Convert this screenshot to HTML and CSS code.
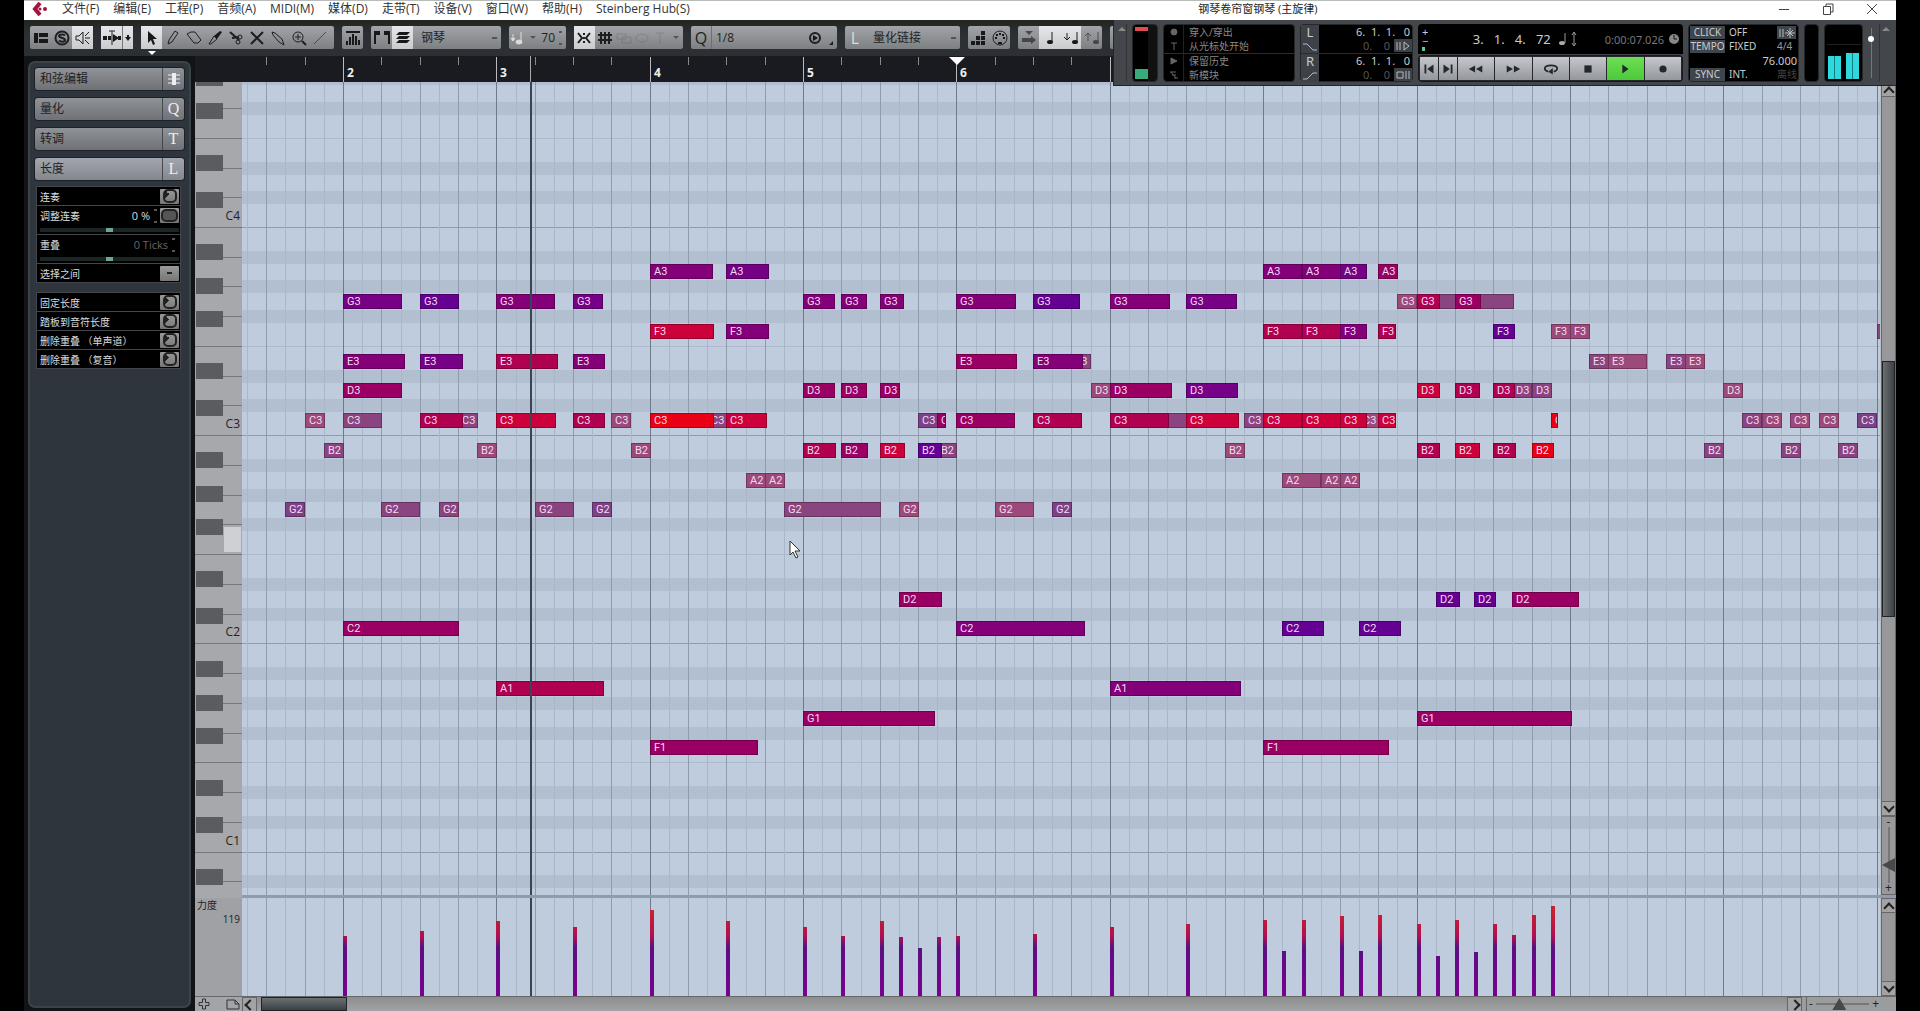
FILE: index.html
```html
<!DOCTYPE html>
<html lang="zh-CN">
<head>
  <meta charset="UTF-8">
  <title>钢琴卷帘窗</title>
  <meta name="viewport" content="width=device-width, initial-scale=1.0">
  <link rel="stylesheet" href="styles.css">
</head>
<body>

<div class="window">

  <header class="menubar">
    <svg class="logo" width="16" height="14" viewBox="0 0 16 14"><path d="M8 1 L3 7 L8 13" fill="none" stroke="#a3153f" stroke-width="4"/><circle cx="8" cy="7" r="1.500" fill="#a3153f"/><circle cx="13" cy="7" r="2" fill="#a3153f"/></svg>
    <nav>
      <a href="#">文件(F)</a>
      <a href="#">编辑(E)</a>
      <a href="#">工程(P)</a>
      <a href="#">音频(A)</a>
      <a href="#">MIDI(M)</a>
      <a href="#">媒体(D)</a>
      <a href="#">走带(T)</a>
      <a href="#">设备(V)</a>
      <a href="#">窗口(W)</a>
      <a href="#">帮助(H)</a>
      <a href="#">Steinberg Hub(S)</a>
    </nav>
    <h1>钢琴卷帘窗钢琴 (主旋律)</h1>
    <div class="win-buttons">
      <button aria-label="最小化"><svg width="12" height="12" viewBox="0 0 12 12"><path d="M1 6.5h10"/></svg></button>
      <button aria-label="还原"><svg width="12" height="12" viewBox="0 0 12 12"><path d="M1.500 3.500h7v8h-7zM4 3.500v-2.500h7v8h-2.500"/></svg></button>
      <button aria-label="关闭"><svg width="12" height="12" viewBox="0 0 12 12"><path d="M1 1l10 10M11 1l-10 10"/></svg></button>
    </div>
  </header>

  <div class="toolbar">
    <div class="group">
      <button aria-label="布局"><svg viewBox="0 0 16 16" class="fill"><path d="M1 3h4v10h-4zM6 3h9v4h-9zM6 9h9v4h-9z"/></svg></button>
      <button aria-label="独奏"><svg viewBox="0 0 16 16"><circle cx="8" cy="8" r="6.500" stroke-width="2"/><path stroke-width="2" d="M11 5.500c-1-1.500-6-1.500-6 .5s6 1.500 6 4-5 2-6 .5"/></svg></button>
      <button class="on" aria-label="声音反馈"><svg viewBox="0 0 16 16"><path d="M1 6h3l4-4v12l-4-4h-3zM10 6l4-4M10 8h5M10 10l4 4"/></svg></button>
    </div>
    <div class="group">
      <button class="on" aria-label="自动滚动"><svg viewBox="0 0 18 16" class="wide"><path class="f" d="M0 6h4v4h-4zM5 6h3v4h-3zM10 4l6 4-6 4zM15 6h3v4h-3z"/><path d="M9 1v14M6 1h6"/></svg></button>
      <button class="on narrow" aria-label="滚动设置"><svg viewBox="0 0 8 16" class="slim"><path class="f" d="M1 7h6l-3 4zM3 5h2v3h-2z"/></svg></button>
    </div>
    <div class="group tools">
      <button class="on tool-active" aria-label="选择"><svg viewBox="0 0 16 16" class="fill"><path d="M4 1l9 8h-4l2 5-2 1-2-5-3 3z"/></svg></button>
      <button aria-label="绘制"><svg viewBox="0 0 16 16"><path d="M3 14l1-4 6-9 3 2-6 9z"/></svg></button>
      <button aria-label="擦除"><svg viewBox="0 0 16 16"><path d="M1 4l4-2h4l6 8-3 3h-4z"/></svg></button>
      <button aria-label="修整"><svg viewBox="0 0 16 16"><path class="f" d="M7 6l6-5 2 1-5 7z"/><path d="M7 6l3 3-6 5-2 0z"/></svg></button>
      <button aria-label="分割"><svg viewBox="0 0 16 16"><path stroke-width="2" d="M2 2l9 8M4 8l7-1"/><circle cx="12" cy="7" r="2"/><circle cx="10" cy="12" r="2"/></svg></button>
      <button aria-label="静音"><svg viewBox="0 0 16 16"><path stroke-width="2" d="M2 2l12 12M14 2l-12 12"/></svg></button>
      <button aria-label="粘合"><svg viewBox="0 0 16 16"><path d="M2 2l3 1 7 6 2 6-5-3-6-7z"/></svg></button>
      <button aria-label="缩放"><svg viewBox="0 0 16 16"><circle cx="7" cy="7" r="5"/><path d="M4 7h6M7 4v6"/><path d="M11 11l4 4" stroke-width="2"/></svg></button>
      <button class="dim" aria-label="直线"><svg viewBox="0 0 16 16"><path d="M2 14l12-12"/></svg></button>
    </div>
    <div class="group">
      <button aria-label="自动选择控制器"><svg viewBox="0 0 16 16" class="fill"><path d="M1 1h14v2h-14zM7 4h2v11h-2zM4 7h2v8h-2zM10 6h2v9h-2zM1 11h2v4h-2zM13 10h2v5h-2z"/></svg></button>
    </div>
    <div class="group part">
      <button aria-label="显示范围"><svg viewBox="0 0 18 16" class="wide"><path class="f" d="M1 1h6v4h-4v9h-2zM11 1h6v13h-2v-9h-4z"/></svg></button>
      <button class="on" aria-label="编辑激活部分"><svg viewBox="0 0 16 16" class="fill"><path d="M4 2h11l-3 3h-11zM4 6h11l-3 3h-11zM4 10h11l-3 3h-11z"/></svg></button>
      <select aria-label="部分"><option>钢琴</option></select>
    </div>
    <div class="group vel">
      <svg viewBox="0 0 16 16" class="light"><path d="M11 2v10M3 4v6M1 8l2 3 2-3"/><ellipse cx="9" cy="12" rx="3" ry="2"/></svg>
      <i class="caret"></i>
      <input type="text" value="70" aria-label="插入力度">
      <i class="spin"></i>
    </div>
    <div class="group snap">
      <button class="on" aria-label="对齐"><svg viewBox="0 0 16 16"><path stroke-width="2" d="M2 3l4 5-4 5M14 3l-4 5 4 5M8 3v2M8 7v2M8 11v2"/></svg></button>
      <button aria-label="网格"><svg viewBox="0 0 16 16"><path stroke-width="2" d="M4 2v12M8 2v12M12 2v12M1 5h14M1 10h14"/></svg></button>
      <button class="off" aria-label="吸附"><svg viewBox="0 0 16 16"><path d="M1 4h9v5h-9zM6 7h9v6h-9z"/></svg></button>
      <button class="off" aria-label="循环"><svg viewBox="0 0 16 16"><ellipse cx="8" cy="8" rx="6" ry="4"/></svg></button>
      <button class="off" aria-label="光标"><svg viewBox="0 0 16 16"><path d="M8 3v11M4 3h8"/></svg></button>
      <i class="caret"></i>
    </div>
    <div class="group quant">
      <b>Q</b>
      <select aria-label="量化预设" class="plain"><option>1/8</option></select>
      <button aria-label="应用量化"><svg viewBox="0 0 16 16"><circle cx="8" cy="8" r="5" stroke-width="2"/><path class="f" d="M6 5l5 3-5 3z"/></svg></button>
      <i class="corner"></i>
    </div>
    <div class="group link">
      <b>L</b>
      <select aria-label="长度量化"><option>量化链接</option></select>
    </div>
    <div class="group">
      <button aria-label="步进输入"><svg viewBox="0 0 16 16" class="fill"><path d="M0 11h4v4h-4zM5 11h4v4h-4zM10 11h4v4h-4zM5 6h4v4h-4zM10 6h4v4h-4zM10 1h4v4h-4z"/></svg></button>
      <button aria-label="MIDI 输入"><svg viewBox="0 0 16 16"><circle cx="8" cy="8" r="7"/><path class="f" d="M3 7h2v2h-2zM11 7h2v2h-2zM7 3h2v2h-2zM4 4h2v2h-2zM10 4h2v2h-2zM6 12h4v2h-4z"/></svg></button>
    </div>
    <div class="group">
      <button class="dim" aria-label="移动插入模式"><svg viewBox="0 0 16 16" class="fill"><path d="M4 1h8l-4 4zM1 8h9v-2l5 4-5 4v-2h-9z"/></svg></button>
      <button class="on" aria-label="录制音高"><svg viewBox="0 0 16 16"><path d="M10 2v10"/><ellipse class="f" cx="8" cy="12" rx="3" ry="2"/></svg></button>
      <button class="on" aria-label="录制起音"><svg viewBox="0 0 16 16"><path d="M14 2v10M4 3v7M1 7l3 3 3-3"/><ellipse class="f" cx="12" cy="12" rx="3" ry="2"/></svg></button>
      <button class="dim" aria-label="录制释音"><svg viewBox="0 0 16 16"><path d="M14 2v10M4 3v8M1 6l3-3 3 3"/><ellipse class="f" cx="12" cy="12" rx="3" ry="2"/></svg></button>
    </div>
    <div class="group more"></div>
  </div>

  <div class="work">

    <aside class="inspector">
      <div class="inspector-box">
        <button class="tab"><span>和弦编辑</span><i><svg width="12" height="14" viewBox="0 0 12 14"><path d="M0 3h12M0 7h12M0 11h12" stroke="#eee"/><path d="M4 1h4v12h-4z" fill="#eee"/></svg></i></button>
        <button class="tab"><span>量化</span><i>Q</i></button>
        <button class="tab"><span>转调</span><i>T</i></button>
        <button class="tab open"><span>长度</span><i>L</i></button>

        <div class="rows">
          <div class="row"><span>连奏</span><button class="go" aria-label="连奏"></button></div>
          <div class="row slide">
            <label for="legato">调整连奏</label><output>0 %</output><i class="spin"></i><button class="go eye" aria-label="显示"></button>
            <input type="range" id="legato">
          </div>
          <div class="row slide gray">
            <label for="overlap">重叠</label><output>0 Ticks</output><i class="spin"></i>
            <input type="range" id="overlap">
          </div>
          <div class="row"><span>选择之间</span><button class="go minus" aria-label="选择之间"></button></div>
        </div>

        <div class="rows">
          <div class="row"><span>固定长度</span><button class="go" aria-label="固定长度"></button></div>
          <div class="row"><span>踏板到音符长度</span><button class="go" aria-label="踏板到音符长度"></button></div>
          <div class="row"><span>删除重叠 （单声道）</span><button class="go" aria-label="删除重叠单声道"></button></div>
          <div class="row"><span>删除重叠 （复音）</span><button class="go" aria-label="删除重叠复音"></button></div>
        </div>
      </div>
    </aside>

    <main class="editor">
      <div class="ruler" id="ruler"></div>
      <div class="keys" id="keys"></div>
      <div class="roll" id="roll"></div>
      <div class="vscroll">
        <button class="arrow up" aria-label="向上"></button>
        <div class="track"><div class="thumb"></div></div>
        <button class="arrow down" aria-label="向下"></button>
        <div class="vzoom"><span>-</span><input type="range" value="74" aria-label="垂直缩放"><span>+</span></div>
      </div>
      <div class="divider"></div>
      <div class="lane-head"><span>力度</span><output>119</output></div>
      <div class="lane" id="lane"></div>
      <div class="vscroll">
        <button class="arrow up" aria-label="向上"></button>
        <div class="track"></div>
        <button class="arrow down" aria-label="向下"></button>
      </div>
      <footer class="bottom">
        <div class="lane-tools">
          <button aria-label="添加控制器"><svg width="12" height="12" viewBox="0 0 12 12"><path d="M4.500 1h3v3.500h3.500v3h-3.500v3.500h-3v-3.500h-3.500v-3h3.500z"/></svg></button>
          <button aria-label="控制器预设"><svg width="14" height="12" viewBox="0 0 14 12"><path d="M1 2h8l4 4v5h-12zM9 2v4h4"/></svg></button>
        </div>
        <button class="arrow left" aria-label="向左"></button>
        <div class="htrack"><div class="hthumb"></div></div>
        <button class="arrow right" aria-label="向右"></button>
        <div class="hzoom"><span>-</span><input type="range" value="42" aria-label="水平缩放"><span>+</span></div>
      </footer>
    </main>

  </div>

  <section class="transport">
    <div class="grip"></div>
    <div class="box level"><i></i><b></b></div>
    <div class="box modes">
      <p><i><svg width="8" height="8" viewBox="0 0 8 8"><circle cx="4" cy="4" r="3" fill="#666"/></svg></i><span>穿入/穿出</span></p>
      <p><i><svg width="8" height="8" viewBox="0 0 8 8"><path d="M1 1h6M4 1v7"/></svg></i><span>从光标处开始</span></p>
      <hr>
      <p><i><svg width="8" height="8" viewBox="0 0 8 8"><path d="M1 1v6l6-3z" fill="#666"/></svg></i><span>保留历史</span></p>
      <p><i><svg width="8" height="8" viewBox="0 0 8 8"><path d="M0 1h6M2 4h4M4 7h4M1 1l5 6"/></svg></i><span>新模块</span></p>
    </div>
    <div class="box locators">
      <div><b>L</b><span>6. &nbsp;1. &nbsp;1. &nbsp; 0</span></div>
      <div class="low"><b><svg width="14" height="8" viewBox="0 0 14 8"><path d="M0 1h4l6 6h4"/></svg></b><span>0. &nbsp; &nbsp;0</span><button aria-label="穿入"><svg width="14" height="10" viewBox="0 0 14 10"><path d="M1 1v8M4 1v8M8 1v8l5-4z"/></svg></button></div>
      <hr>
      <div><b>R</b><span>6. &nbsp;1. &nbsp;1. &nbsp; 0</span></div>
      <div class="low"><b><svg width="14" height="8" viewBox="0 0 14 8"><path d="M0 7h4l6-6h4"/></svg></b><span>0. &nbsp; &nbsp;0</span><button aria-label="穿出"><svg width="14" height="10" viewBox="0 0 14 10"><path d="M1 2h6v6h-6zM10 1v8M13 1v8"/></svg></button></div>
    </div>
    <div class="center">
      <div class="display">
        <div class="nudge"><span>+</span><span>−</span><i></i></div>
        <output class="pos">3. &nbsp; 1. &nbsp; 4. &nbsp; 72</output>
        <svg class="unit" width="20" height="18" viewBox="0 0 20 18"><path d="M8 3v10M17 3v12M15 5l2-3 2 3M15 13l2 3 2-3" stroke="#999" fill="none"/><ellipse cx="5" cy="13" rx="3" ry="2" fill="#aaa"/></svg>
        <output class="time">0:00:07.026</output>
        <svg width="10" height="10" viewBox="0 0 10 10"><circle cx="5" cy="5" r="5" fill="#888"/><path d="M5 1v4h3" stroke="#111" fill="none"/></svg>
      </div>
      <div class="buttons">
        <button class="small" aria-label="上一标记"><svg viewBox="0 0 20 12"><path d="M5 1h2v10h-2zM15 1v10l-7-5z"/></svg></button>
        <button class="small" aria-label="下一标记"><svg viewBox="0 0 20 12"><path d="M13 1h2v10h-2zM5 1v10l7-5z"/></svg></button>
        <button aria-label="后退"><svg viewBox="0 0 20 12"><path d="M9 2v8l-7-4zM17 2v8l-7-4z"/></svg></button>
        <button aria-label="前进"><svg viewBox="0 0 20 12"><path d="M3 2v8l7-4zM11 2v8l7-4z"/></svg></button>
        <button aria-label="循环"><svg viewBox="0 0 20 12"><path d="M7 9c-6-2-5-7 3-7s9 5 3 7" fill="none" stroke="#23282c" stroke-width="2"/><path d="M12 5v7l-5-3z"/></svg></button>
        <button aria-label="停止"><svg viewBox="0 0 20 12"><path d="M6 2h8v8h-8z"/></svg></button>
        <button class="play" aria-label="播放"><svg viewBox="0 0 20 12"><path d="M7 1v10l7-5z"/></svg></button>
        <button aria-label="录音"><svg viewBox="0 0 20 12"><circle cx="10" cy="6" r="4"/></svg></button>
      </div>
    </div>
    <div class="box tempo">
      <button>CLICK</button><span>OFF</span><button class="count" aria-label="预备拍"><svg width="16" height="10" viewBox="0 0 16 10"><path d="M1 1v8M4 1v8M11 0v10M6 5h10M8 2l6 6M14 2l-6 6"/></svg></button>
      <button>TEMPO</button><span>FIXED</span><span class="sig">4/4</span>
      <output>76.000</output>
      <button>SYNC</button><span>INT.</span><span class="faint">离线</span>
    </div>
    <div class="box midi"></div>
    <div class="box meter"><i class="ch1"></i><i class="ch2"></i></div>
    <div class="fader"><i></i></div>
    <div class="grip end"></div>
  </section>

</div>

<script src="script.js"></script>
</body>
</html>
```
FILE: styles.css
```css
* {
  box-sizing: border-box;
}

body {
  margin: 0;
  padding: 0 24px;
  background: #000;
  font-family: "Open Sans", "Noto Sans CJK SC", sans-serif;
  font-size: 12px;
  color: #222;
}

button, input, select {
  font: inherit;
  color: inherit;
  border: 0;
  margin: 0;
  padding: 0;
  background: none;
}

.window {
  position: relative;
  display: flex;
  flex-direction: column;
  height: 100vh;
  background: #1b1d22;
  overflow: hidden;
}

/* menu */
.menubar {
  display: flex;
  align-items: center;
  height: 20px;
  padding: 0 18px 4px 8px;
  background: #fff;
  border-top: 1px solid #b9bdb9;
  flex: none;
}

.menubar nav {
  display: flex;
  gap: 14px;
  margin-left: 14px;
}

.menubar a {
  color: #333;
  text-decoration: none;
  line-height: 16px;
  white-space: nowrap;
}

.menubar h1 {
  flex: 1;
  margin: 0;
  padding-left: 48px;
  font-size: 11px;
  font-weight: normal;
  line-height: 16px;
  text-align: center;
}

.win-buttons {
  display: flex;
  gap: 32px;
}

.win-buttons button {
  display: flex;
}

.win-buttons svg {
  fill: none;
  stroke: #444;
}

/* toolbar */
.toolbar {
  display: flex;
  gap: 8px;
  height: 36px;
  padding: 6px;
  background: linear-gradient(#22261f, #2c2f34 40%);
  flex: none;
}

.group {
  display: flex;
  align-items: center;
  height: 23px;
  background: linear-gradient(#a2a4a6, #7d8083);
  border-radius: 2px;
}

.group button {
  position: relative;
  display: flex;
  align-items: center;
  justify-content: center;
  width: 21px;
  height: 23px;
}

.group .on {
  background: linear-gradient(#e6e7e8, #c9cbcd);
}

.group .narrow {
  width: 11px;
  border-left: 1px solid #777;
}

.group svg {
  width: 16px;
  height: 16px;
  fill: none;
  stroke: #1c1e20;
}

.group svg.wide {
  width: 18px;
}

.group svg.slim {
  width: 8px;
}

.group svg.fill, .group .f {
  fill: #16181a;
  stroke: none;
}

.group .dim {
  opacity: 0.6;
}

.group .off {
  opacity: 0.15;
  width: 18px;
}

.group select {
  appearance: none;
  flex: 1;
  height: 23px;
  padding: 0 8px;
  font-size: 12px;
  background: linear-gradient(#555, #555) no-repeat right 4px center / 5px 2px;
}

.group select.plain {
  background: none;
  border-left: 1px solid #6d7073;
  padding: 0 4px;
}

.group b {
  width: 20px;
  text-align: center;
  font-size: 16px;
  font-weight: normal;
}

.group .light {
  fill: #dcdcdc;
  stroke: #dcdcdc;
}

.tools {
  padding-right: 4px;
}

.more {
  width: 20px;
}

.tool-active::after {
  content: "";
  position: absolute;
  top: 25px;
  left: 7px;
  border: 4px solid transparent;
  border-top-color: #fff;
}

.part {
  width: 130px;
}

.vel {
  width: 57px;
  padding: 0 3px 0 1px;
}

.vel input {
  flex: 1;
  min-width: 0;
  text-align: right;
}

.snap {
  width: 109px;
}

.quant {
  width: 146px;
}

.link {
  width: 115px;
}

.link b {
  color: #dcdcdc;
}

.caret {
  width: 6px;
  height: 0;
  border: 3px solid transparent;
  border-top-color: #555;
  border-bottom: 0;
  margin: 0 4px;
}

.corner {
  align-self: flex-end;
  margin: 4px;
  border: 2px solid #1c1e20;
  border-top-color: transparent;
  border-left-color: transparent;
}

.spin {
  width: 5px;
  height: 14px;
  margin-left: 3px;
  background:
    linear-gradient(#555, #555) top / 3px 2px no-repeat,
    linear-gradient(#555, #555) bottom / 3px 2px no-repeat;
}

/* inspector */
.work {
  display: flex;
  flex: 1;
  min-height: 0;
}

.inspector {
  width: 171px;
  padding: 5px 4px 3px;
  background: #111317;
  flex: none;
}

.inspector-box {
  height: 100%;
  padding: 5px;
  border: 2px solid #3a4448;
  border-radius: 7px;
  background: #2f353d;
}

.tab {
  display: flex;
  width: 149px;
  height: 22px;
  margin-bottom: 8px;
  border-radius: 3px;
  background: linear-gradient(#8f9297, #6e7176);
  box-shadow: 0 0 0 1px #1d2024;
  line-height: 22px;
  text-align: left;
}

.tab.open {
  background: linear-gradient(#a3a6ae, #84878d);
  margin-bottom: 6px;
}

.tab span {
  flex: 1;
  padding-left: 5px;
}

.tab i {
  display: flex;
  align-items: center;
  justify-content: center;
  width: 22px;
  height: 22px;
  border-left: 1px solid #44474c;
  color: #eee;
  font: 16px "Liberation Serif", serif;
}

.rows {
  margin: 0 3px 9px 1px;
  padding: 1px;
  background: #43454a;
}

.row {
  display: flex;
  align-items: center;
  height: 18px;
  padding: 0 1px 0 3px;
  background: #000;
  color: #ddd;
  font-size: 10px;
}

.row + .row {
  margin-top: 1px;
}

.row span, .row label {
  flex: 1;
}

.row.slide {
  flex-wrap: wrap;
  height: 28px;
}

.row.slide .go {
  margin-left: 2px;
}

.slide output {
  font-size: 11px;
}

.slide input {
  appearance: none;
  width: 140px;
  height: 4px;
  background: #1a2526;
}

.slide input::-webkit-slider-thumb {
  appearance: none;
  width: 7px;
  height: 4px;
  background: #6fa595;
}

.slide.gray output {
  color: #666;
}

.slide.gray .spin {
  margin-right: 3px;
}

.go {
  display: flex;
  align-items: center;
  justify-content: center;
  width: 19px;
  height: 15px;
  background: linear-gradient(#999, #777);
  border-radius: 1px;
}

.go::before {
  content: "";
  width: 10px;
  height: 10px;
  border: 2px solid #222;
  border-radius: 5px;
  background: conic-gradient(from 225deg at 4px 3px, #222 90deg, transparent 0);
}

.go.eye::before {
  width: 13px;
  height: 9px;
  background: #555;
}

.go.minus::before {
  width: 5px;
  height: 2px;
  border: 0;
  border-radius: 0;
  background: #222;
}

/* editor */
.editor {
  display: grid;
  flex: 1;
  min-width: 0;
  grid-template-columns: 47px 1fr 16px;
  grid-template-rows: 26px 1fr 3px 98px 15px;
  background: #9a9a9c;
}

.ruler {
  position: relative;
  grid-column: 1 / 4;
  background: #191b21;
  overflow: hidden;
}

.ruler i {
  position: absolute;
  top: 1px;
  width: 1px;
  height: 8px;
  background: #888;
}

.ruler .bar {
  height: 25px;
  background: #bbb;
}

.ruler b {
  position: absolute;
  bottom: 1px;
  margin-left: 4px;
  font-size: 12px;
  line-height: 16px;
  color: #eee;
}

.ruler .marker {
  position: absolute;
  top: 1px;
  margin-left: -7px;
  border: 8px solid transparent;
  border-top-color: #fff;
  border-bottom: 0;
}

.keys {
  position: relative;
  background: #a7a8ab;
  overflow: hidden;
}

.keys i {
  position: absolute;
  right: 0;
  width: 20px;
  height: 1px;
  background: #76777a;
}

.keys .whole {
  width: 47px;
}

.keys .black {
  position: absolute;
  left: 1px;
  width: 27px;
  height: 16px;
  background: #5b5c60;
}

.keys span {
  position: absolute;
  right: 2px;
  line-height: 16px;
  font-size: 12px;
}

.keys .pressed {
  position: absolute;
  right: 1px;
  width: 17px;
  height: 25px;
  background: #cfd0d3;
}

.roll, .lane {
  position: relative;
  overflow: hidden;
  background: #bfccdd;
}

.stripe {
  position: absolute;
  width: 100%;
  height: 13px;
  background: #b2bfd0;
}

.octave, .half-octave {
  position: absolute;
  width: 100%;
  height: 1px;
  background: #8f9cac;
}

.half-octave {
  background: #aebacb;
}

.line {
  position: absolute;
  top: 0;
  bottom: 0;
  width: 1px;
  background: #aab7c8;
}

.line.beat {
  background: #8f9cad;
}

.line.bar {
  background: #6f7b8b;
}

.playhead {
  position: absolute;
  top: 0;
  bottom: 0;
  width: 2px;
  background: #3c4452;
}

.ruler .playhead {
  background: #aaa;
  width: 1px;
}

.note {
  position: absolute;
  height: 15px;
  padding-left: 3px;
  border: 1px solid #0004;
  color: #f0dcee;
  font: 11px/13px "Roboto", sans-serif;
  overflow: hidden;
  white-space: nowrap;
}

.n0 { background: #640092; }
.n1 { background: #760086; }
.n2 { background: #840078; }
.n3 { background: #9a0064; }
.n4 { background: #b00050; }
.n5 { background: #cc003a; }
.n6 { background: #ea0014; }
.m0 { background: #7c4187; }
.m1 { background: #8a4580; }
.m2 { background: #9c4a7c; }

.pointer {
  position: absolute;
  width: 12px;
  height: 19px;
}

.velocity {
  position: absolute;
  bottom: 0;
  width: 4px;
  background: linear-gradient(to top, #7a0090, #5a1080 48px, #b01050 60px, #c82030 84px);
}

.divider {
  grid-column: 1 / 4;
  background: linear-gradient(90deg, #a7a8ab 47px, #8f9cab 47px);
}

.lane-head {
  display: flex;
  flex-direction: column;
  padding: 0 2px;
  background: #a0a1a4;
  font-size: 10px;
  line-height: 14px;
}

.lane-head output {
  text-align: right;
}

.vscroll {
  display: flex;
  flex-direction: column;
  border-left: 1px solid #b8c0c8;
  background: #98989a;
}

.arrow {
  display: flex;
  align-items: center;
  justify-content: center;
  width: 15px;
  height: 15px;
  border: 1px solid #666;
  background: #a3a3a3;
  flex: none;
}

.arrow::before {
  content: "";
  width: 6px;
  height: 6px;
  border: solid #222;
  border-width: 2px 2px 0 0;
}

.up::before {
  transform: translateY(2px) rotate(-45deg);
}

.down::before {
  transform: translateY(-2px) rotate(135deg);
}

.left::before {
  transform: rotate(-135deg);
}

.right::before {
  transform: rotate(45deg);
}

.track {
  flex: 1;
  display: flex;
  flex-direction: column;
  border: solid #666;
  border-width: 0 1px;
}

/* share of the keyboard above the visible part */
.track::before {
  content: "";
  flex: 265;
}

.track::after {
  content: "";
  flex: 185;
}

.thumb {
  flex: 256;
  background: linear-gradient(90deg, #6a6f72, #3b4044);
  border: 1px solid #222;
}

.vzoom {
  display: flex;
  flex-direction: column;
  align-items: center;
  height: 79px;
  border: 1px solid #666;
  line-height: 10px;
}

.vzoom input {
  appearance: none;
  writing-mode: vertical-lr;
  width: 13px;
  height: 56px;
  background: linear-gradient(#777, #777) center / 2px 100% no-repeat;
}

.vzoom input::-webkit-slider-thumb {
  appearance: none;
  width: 13px;
  height: 14px;
  background: #45494c;
  clip-path: polygon(0 50%, 100% 0, 100% 100%);
}

.bottom {
  display: flex;
  grid-column: 1 / 4;
  background: #9b9c9e;
  border-top: 1px solid #66686b;
}

.lane-tools {
  display: flex;
  align-items: center;
  justify-content: space-between;
  width: 47px;
  padding: 0 2px 0 3px;
  background: #a3a4a7;
}

.lane-tools svg {
  display: block;
  fill: none;
  stroke: #333;
}

.htrack {
  display: flex;
  flex: 1;
  padding-left: 4px;
  background: linear-gradient(#8d8d8f, #a2a2a4);
}

.hthumb {
  width: 86px;
  background: linear-gradient(#6a6f72, #3b4044);
  border: 1px solid #222;
}

.hzoom {
  display: flex;
  align-items: center;
  width: 75px;
  margin: 0 15px 0 4px;
  padding: 0 2px;
  border-left: 1px solid #666;
  line-height: 10px;
}

.hzoom input {
  appearance: none;
  flex: 1;
  min-width: 0;
  height: 14px;
  margin: 0 3px;
  background: linear-gradient(#777, #777) center / 100% 2px no-repeat;
}

.hzoom input::-webkit-slider-thumb {
  appearance: none;
  width: 14px;
  height: 12px;
  background: #45494c;
  clip-path: polygon(50% 0, 100% 100%, 0 100%);
}

/* transport panel floats over the toolbar and ruler */
.transport {
  position: absolute;
  top: 20px;
  right: 0;
  display: flex;
  gap: 5px;
  height: 66px;
  padding: 4px 2px 3px;
  background: #43464a;
  border: solid #22252a;
  border-width: 0 0 1px 1px;
  color: #ccc;
  font: 11px "Noto Sans", "Noto Sans CJK SC", sans-serif;
}

.box {
  background: #000;
  border-radius: 4px;
  border: 1px solid #25282b;
}

.transport hr {
  margin: 0;
  border: 0;
  border-top: 1px solid #2c2c2c;
}

.grip {
  width: 11px;
  border-right: 1px solid #333;
}

.grip::before {
  content: "";
  display: block;
  margin: 3px 0 0 2px;
  width: 0;
  border: 4px solid transparent;
  border-top: 0;
  border-bottom-color: #888;
}

.grip.end {
  width: 15px;
  border-right: 0;
  border-left: 1px solid #333;
}

.level {
  display: flex;
  flex-direction: column;
  justify-content: space-between;
  width: 26px;
  padding: 2px;
  background: linear-gradient(90deg, #000 15px, #111 15px);
}

.level i {
  width: 13px;
  height: 4px;
  background: #e04a50;
}

.level b {
  width: 13px;
  height: 10px;
  background: #38ab7c;
}

.modes {
  width: 132px;
  font-size: 10px;
  color: #888;
}

.modes p {
  display: flex;
  margin: 0;
  height: 14px;
  line-height: 14px;
}

.modes i {
  display: flex;
  align-items: center;
  justify-content: center;
  width: 20px;
  margin-right: 5px;
  border-right: 1px solid #222;
}

.modes svg {
  fill: none;
  stroke: #666;
}

.locators {
  width: 113px;
}

.locators div {
  display: flex;
  height: 14px;
  line-height: 14px;
}

.locators b {
  width: 18px;
  text-align: center;
  background: #3d4248;
  font-size: 13px;
  font-weight: normal;
}

.locators svg {
  fill: none;
  stroke: #bbb;
}

.locators span {
  flex: 1;
  padding-right: 2px;
  text-align: right;
}

.locators .low span {
  color: #555;
  padding-right: 4px;
}

.locators button {
  display: flex;
  align-items: center;
  justify-content: center;
  width: 18px;
  height: 13px;
  background: #3d4248;
}

.center {
  display: flex;
  flex-direction: column;
  width: 265px;
}

.display {
  display: flex;
  align-items: center;
  height: 30px;
  padding: 0 4px;
  background: #000;
  border-radius: 4px 4px 0 0;
}

.nudge {
  display: flex;
  flex-direction: column;
  width: 10px;
  line-height: 9px;
}

.nudge i {
  width: 3px;
  height: 4px;
  margin-top: 2px;
  background: #5fc79c;
}

.pos {
  flex: 1;
  text-align: right;
  font-size: 13px;
}

.unit {
  margin-left: 6px;
}

.time {
  padding: 0 5px 0 28px;
  color: #777;
}

.buttons {
  display: flex;
  flex: 1;
  gap: 1px;
  margin-top: 1px;
  padding: 1px;
  border: 1px solid #17191b;
  border-radius: 4px;
  background: #25282b;
}

.buttons button {
  flex: 1;
  display: flex;
  align-items: center;
  justify-content: center;
  background: linear-gradient(#c5c7cc, #94979d);
}

.buttons .small {
  flex: none;
  width: 18px;
}

.buttons .play {
  background: linear-gradient(#6ede55, #4cc93b);
}

.buttons svg {
  width: 18px;
  height: 12px;
  fill: #23282c;
}

.tempo {
  display: grid;
  grid-template-columns: 35px 1fr auto;
  grid-template-rows: 14px 14px 14px 14px;
  column-gap: 4px;
  width: 111px;
  padding: 1px;
  font-size: 10px;
  line-height: 13px;
}

.tempo button {
  height: 13px;
  background: #3f454d;
  line-height: 13px;
}

.tempo .count {
  display: flex;
  align-items: center;
  justify-content: center;
  width: 19px;
}

.tempo svg {
  stroke: #bbb;
}

.tempo output {
  grid-column: 1 / 4;
  text-align: right;
  font-size: 11px;
}

.sig {
  color: #999;
}

.faint {
  color: #444;
}

.midi {
  width: 15px;
}

.meter {
  display: flex;
  align-items: flex-end;
  justify-content: space-between;
  width: 39px;
  padding: 2px 3px;
  background: linear-gradient(#222, #222) center 19px / 34px 1px no-repeat #000;
}

.meter i {
  width: 13px;
  background: linear-gradient(90deg, #2fd8dc 6px, #0f7f84 6px, #0f7f84 7px, #2fd8dc 7px);
}

.meter .ch1 {
  height: 23px;
}

.meter .ch2 {
  height: 26px;
}

.fader {
  width: 6px;
  margin: 4px 0;
  background: linear-gradient(#777, #777) center / 1px 100% no-repeat;
}

.fader i {
  display: block;
  width: 6px;
  height: 6px;
  margin-top: 8px;
  border-radius: 3px;
  background: #fff;
}
```
FILE: script.js
```js
// one step = an eighth note, step 0 = start of bar 2
const STEP = 19.17;
const ORIGIN = 101;
const KEYS_WIDTH = 47;
// one white key row
const ROW = 29.74;
const C4_LINE = 145;

const roll = document.getElementById('roll');
const lane = document.getElementById('lane');
const ruler = document.getElementById('ruler');
const keys = document.getElementById('keys');

const xOf = step => Math.round(ORIGIN + step * STEP);

// pitch: [step, length, colour]; muted parts first, they lie underneath
const notes = {
  A3: [[16, 3.25, 'n2'], [20, 2.2, 'n1'], [48, 2, 'n2'], [50, 2, 'n2'], [52, 1.35, 'n1'], [54, 1, 'n3']],
  G3: [[55, 1, 'm2'], [56, 5, 'm1'], [0, 3, 'n1'], [4, 2, 'n0'], [8, 3, 'n2'], [12, 1.5, 'n1'], [24, 1.6, 'n2'],
    [26, 1.3, 'n2'], [28, 1.2, 'n2'], [32, 3.1, 'n2'], [36, 2.4, 'n0'], [40, 3.1, 'n2'], [44, 2.6, 'n1'],
    [56, 1.15, 'n4'], [58, 1.3, 'n3']],
  F3: [[63, 1, 'm2'], [64, 1, 'm2'], [80, 1, 'm1'], [16, 3.3, 'n5'], [20, 2.2, 'n2'], [48, 2, 'n4'], [50, 2, 'n4'],
    [52, 1.35, 'n2'], [54, 0.9, 'n4'], [60, 1.1, 'n0']],
  E3: [[38, 1, 'm1'], [65, 1, 'm1'], [66, 2, 'm2'], [69, 1, 'm1'], [70, 1, 'm2'], [0, 3.2, 'n2'], [4, 2.2, 'n1'],
    [8, 3.2, 'n4'], [12, 1.6, 'n2'], [32, 3.15, 'n3'], [36, 2.55, 'n2']],
  D3: [[39, 1, 'm2'], [61, 1, 'm1'], [62, 1, 'm1'], [72, 1, 'm2'], [0, 3.05, 'n3'], [24, 1.6, 'n3'], [26, 1.3, 'n3'],
    [28, 1, 'n3'], [40, 3.2, 'n3'], [44, 2.65, 'n1'], [56, 1.15, 'n5'], [58, 1.25, 'n4'], [60, 1.1, 'n4']],
  C3: [[-2, 1, 'm2'], [0, 2, 'm1'], [6, 1, 'm1'], [14, 1, 'm2'], [19, 1, 'm1'], [30, 1, 'm0'], [42, 2, 'm1'],
    [47, 1, 'm1'], [53, 1, 'm2'], [73, 1, 'm1'], [74, 1, 'm2'], [75.5, 1, 'm2'], [77, 1, 'm2'], [79, 1, 'm0'],
    [4, 2.2, 'n4'], [8, 3.1, 'n5'], [12, 1.6, 'n4'], [16, 3.3, 'n6'], [20, 2.1, 'n5'], [31, 0.4, 'n3'],
    [32, 3.05, 'n3'], [36, 2.5, 'n4'], [40, 3, 'n4'], [44, 2.7, 'n5'], [48, 2, 'n5'], [50, 2, 'n5'],
    [52, 1.35, 'n5'], [54, 0.9, 'n5'], [63, 0.3, 'n6']],
  B2: [[-1, 1, 'm1'], [7, 1, 'm2'], [15, 1, 'm2'], [31, 1, 'm1'], [46, 1, 'm2'], [71, 1, 'm1'], [75, 1, 'm1'],
    [78, 1, 'm1'], [24, 1.65, 'n4'], [26, 1.35, 'n3'], [28, 1.25, 'n5'], [30, 1.2, 'n0'], [56, 1.15, 'n4'],
    [58, 1.25, 'n5'], [60, 1.15, 'n4'], [62, 1.1, 'n6']],
  A2: [[21, 1, 'm2'], [22, 1, 'm2'], [49, 2, 'm2'], [51, 1, 'm2'], [52, 1, 'm2']],
  G2: [[-3, 1, 'm0'], [2, 2, 'm1'], [5, 1, 'm1'], [10, 2, 'm1'], [13, 1, 'm0'], [23, 5, 'm1'], [29, 1, 'm2'],
    [34, 2, 'm2'], [37, 1, 'm0']],
  D2: [[29, 2.2, 'n3'], [57, 1.2, 'n0'], [59, 1.1, 'n0'], [61, 3.45, 'n3']],
  C2: [[0, 6, 'n3'], [32, 6.7, 'n2'], [49, 2.15, 'n0'], [53, 2.15, 'n0']],
  A1: [[8, 5.6, 'n4'], [40, 6.8, 'n2']],
  G1: [[24, 6.85, 'n3'], [56, 8.05, 'n3']],
  F1: [[16, 5.6, 'n3'], [48, 6.5, 'n3']]
};

// [step, height]
const velocities = [
  [0, 60], [4, 65], [8, 75], [12, 69], [16, 86], [20, 75], [24, 69], [26, 60], [28, 75], [29, 59],
  [30, 48], [31, 59], [32, 60], [36, 62], [40, 69], [44, 72], [48, 76], [49, 45], [50, 76], [52, 80],
  [53, 45], [54, 81], [56, 72], [57, 40], [58, 76], [59, 44], [60, 72], [61, 61], [62, 81], [63, 90]
];

function add(parent, tag, cls, style, text) {
  const el = document.createElement(tag);
  if (cls) el.className = cls;
  for (const k in style) el.style[k] = style[k] + 'px';
  if (text) el.textContent = text;
  parent.appendChild(el);
  return el;
}

// rows and keyboard
const blackTops = { 1: 35, 2: 72, 4: 124, 5: 157, 6: 191 };
for (let oct = 4; oct >= 0; oct--) {
  const base = C4_LINE + (4 - oct) * ROW * 7;
  add(roll, 'div', 'octave', { top: Math.round(base) });
  add(keys, 'i', 'whole', { top: Math.round(base) });
  if (oct > 0) add(keys, 'span', '', { top: Math.round(base) - 19 }, 'C' + oct);
  for (let k = 1; k < 7; k++) {
    const y = Math.round(base - k * ROW);
    if (k === 3) {
      add(roll, 'div', 'half-octave', { top: y });
      add(keys, 'i', 'whole', { top: y });
    } else {
      add(roll, 'div', 'stripe', { top: y - 6 });
      add(keys, 'i', '', { top: y });
      add(keys, 'div', 'black', { top: Math.round(base) - blackTops[k] });
    }
  }
}
add(keys, 'div', 'pressed', { top: 445 });

// time lines
for (let s = -5; xOf(s) < roll.clientWidth; s++) {
  const cls = s % 8 === 0 ? 'line bar' : s % 2 === 0 ? 'line beat' : 'line';
  add(roll, 'div', cls, { left: xOf(s) });
  add(lane, 'div', cls, { left: xOf(s) });
  // bars from 7 on are hidden behind the transport panel
  if (s > 40) continue;
  if (s % 2 === 0) add(ruler, 'i', s % 8 === 0 ? 'bar' : '', { left: xOf(s) + KEYS_WIDTH });
  if (s % 8 === 0 && s < 40) add(ruler, 'b', '', { left: xOf(s) + KEYS_WIDTH }, String(s / 8 + 2));
}
add(ruler, 'div', 'marker', { left: xOf(32) + KEYS_WIDTH });

// notes
for (const name in notes) {
  const rowsBelow = (4 - name[1]) * 7 - 'CDEFGAB'.indexOf(name[0]);
  const top = Math.round(C4_LINE + rowsBelow * ROW - 22);
  notes[name].forEach(([step, len, colour]) => {
    add(roll, 'div', 'note ' + colour, { left: xOf(step), top: top, width: Math.round(len * STEP) + 1 }, name);
  });
}

velocities.forEach(([step, height]) => {
  add(lane, 'div', 'velocity', { left: xOf(step), height: height });
});

// play position
[roll, lane].forEach(el => add(el, 'div', 'playhead', { left: 288 }));
add(ruler, 'div', 'playhead', { left: 288 + KEYS_WIDTH });

const pointer = add(roll, 'div', 'pointer', { left: 547, top: 458 });
pointer.innerHTML = '<svg width="12" height="19" viewBox="0 0 12 19"><path d="M1 1v14l3-3 3 6 2-1-3-6h5z" fill="#fff" stroke="#333"/></svg>';
```
